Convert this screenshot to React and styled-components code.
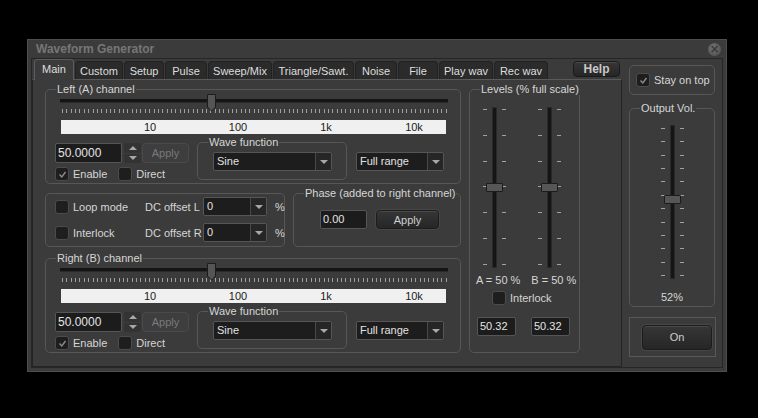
import React from "react";
import styled, { createGlobalStyle } from "styled-components";

const GlobalStyle = createGlobalStyle`
  html, body {
    margin: 0;
    padding: 0;
    background: #000000;
  }
  body {
    font-family: "Liberation Sans", Arial, sans-serif;
    font-size: 11px;
    color: #d6d6d6;
  }
  * {
    box-sizing: border-box;
  }
`;

const TABS = [
  ["Main", 40], ["Custom", 48], ["Setup", 40], ["Pulse", 42], ["Sweep/Mix", 64],
  ["Triangle/Sawt.", 81], ["Noise", 42], ["File", 40], ["Play wav", 54], ["Rec wav", 54],
];

const SCALE = ["10", "100", "1k", "10k"];

function Check({ checked }) {
    return (
        <CheckBox>
            {checked && (
                <svg width="11" height="11" viewBox="0 0 11 11">
                    <polyline points="2.5,5.5 4.8,8 8.5,3" fill="none" stroke="#8c8c8c" strokeWidth="1.4" />
                </svg>
            )}
        </CheckBox>
    );
}

function Dropdown({ value, width }) {
    return (
        <Select $w={width}>
            <SelectValue>{value}</SelectValue>
            <SelectArrow><Arrow /></SelectArrow>
        </Select>
    );
}

function HSlider({ thumbLeft }) {
    return (
        <SliderBox>
            <Track />
            <Ticks />
            <Thumb style={{ left: thumbLeft }}>
                <svg width="9" height="18" viewBox="0 0 9 18">
                    <polygon points="0.5,0.5 8.5,0.5 8.5,13 4.5,17 0.5,13" fill="#555555" stroke="#1c1c1c" />
                </svg>
            </Thumb>
        </SliderBox>
    );
}

function VSlider({ height, ticks, thumbTop, pad }) {
    const list = Array.from({ length: ticks });
    return (
        <VWrap $h={height}>
            <TickCol $pad={pad}>{list.map((_, i) => <Tick key={i} />)}</TickCol>
            <VTrack>
                <VThumb style={{ top: thumbTop }} />
            </VTrack>
            <TickCol $pad={pad}>{list.map((_, i) => <Tick key={i} />)}</TickCol>
        </VWrap>
    );
}

function Channel({ title, gapTop }) {
    return (
        <ChannelGroup $top={gapTop}>
            <Legend>{title}</Legend>
            <ChannelBody>
                <HSlider thumbLeft={147} />
                <Scale>
                    {SCALE.map(s => <ScaleCell key={s}>{s}</ScaleCell>)}
                </Scale>
                <ControlsRow>
                    <InputCol>
                        <InlineRow>
                            <Field $w={67} $h={20} $fs={12}>50.0000</Field>
                            <Spinner>
                                <SpinHalf><UpArrow /></SpinHalf>
                                <SpinHalf><Arrow /></SpinHalf>
                            </Spinner>
                            <Button $w={47} $h={20} disabled>Apply</Button>
                        </InlineRow>
                        <CheckRow>
                            <CheckLabel><Check checked />Enable</CheckLabel>
                            <CheckLabel><Check />Direct</CheckLabel>
                        </CheckRow>
                    </InputCol>
                    <WaveGroup>
                        <Legend>Wave function</Legend>
                        <WaveBody>
                            <Dropdown value="Sine" width={119} />
                        </WaveBody>
                    </WaveGroup>
                    <RangeSlot>
                        <Dropdown value="Full range" width={88} />
                    </RangeSlot>
                </ControlsRow>
            </ChannelBody>
        </ChannelGroup>
    );
}

export default function App() {
    return (
        <Screen>
            <GlobalStyle />
            <Window>
                <TitleBar>
                    <Title>Waveform Generator</Title>
                    <Close>×</Close>
                </TitleBar>
                <Frame>
                    <LeftArea>
                        <TabRow>
                            {TABS.map(([name, w], i) => (
                                <Tab key={name} $w={w} $active={i === 0}>{name}</Tab>
                            ))}
                            <Help>Help</Help>
                        </TabRow>
                        <Panel>
                            <MainColumn>
                                <Channel title="Left (A) channel" gapTop={0} />
                                <MiddleRow>
                                    <LoopGroup>
                                        <LoopGrid>
                                            <CheckLabel><Check />Loop mode</CheckLabel>
                                            <span>DC offset L</span>
                                            <Dropdown value="0" width={64} />
                                            <Percent>%</Percent>
                                            <CheckLabel><Check />Interlock</CheckLabel>
                                            <span>DC offset R</span>
                                            <Dropdown value="0" width={64} />
                                            <Percent>%</Percent>
                                        </LoopGrid>
                                    </LoopGroup>
                                    <PhaseGroup>
                                        <Legend>Phase (added to right channel)</Legend>
                                        <PhaseBody>
                                            <Field $w={47} $h={19}>0.00</Field>
                                            <Button $w={63} $h={19}>Apply</Button>
                                        </PhaseBody>
                                    </PhaseGroup>
                                </MiddleRow>
                                <Channel title="Right (B) channel" gapTop={5} />
                            </MainColumn>
                            <LevelsGroup>
                                <Legend>Levels (% full scale)</Legend>
                                <LevelSliders>
                                    <VSlider height={161} ticks={7} thumbTop={75} pad="2px 0 3px" />
                                    <VSlider height={161} ticks={7} thumbTop={75} pad="2px 0 3px" />
                                </LevelSliders>
                                <LevelLabels>
                                    <span>A = 50 %</span>
                                    <span>B = 50 %</span>
                                </LevelLabels>
                                <LevelInterlock>
                                    <CheckLabel><Check />Interlock</CheckLabel>
                                </LevelInterlock>
                                <LevelInputs>
                                    <Field $w={39} $h={19}>50.32</Field>
                                    <Field $w={39} $h={19}>50.32</Field>
                                </LevelInputs>
                            </LevelsGroup>
                        </Panel>
                    </LeftArea>
                    <RightColumn>
                        <StayBox>
                            <CheckLabel><Check checked />Stay on top</CheckLabel>
                        </StayBox>
                        <OutGroup>
                            <Legend>Output Vol.</Legend>
                            <OutBody>
                                <VSlider height={154} ticks={12} thumbTop={69} pad="3px 0 3px" />
                                <OutValue>52%</OutValue>
                            </OutBody>
                        </OutGroup>
                        <OnBox>
                            <Button $w={70} $h={25}>On</Button>
                        </OnBox>
                    </RightColumn>
                </Frame>
            </Window>
        </Screen>
    );
}

const Screen = styled.div`
    width: 758px;
    height: 418px;
    padding: 39px 0 0 27px;
    background: #000000;
`;

const Window = styled.div`
    width: 700px;
    height: 333px;
    background: #3b3b3b;
    border: 1px solid #4e4e4e;
    padding: 0 3px 3px 3px;
    display: flex;
    flex-direction: column;
`;

const TitleBar = styled.div`
    height: 18px;
    display: flex;
    align-items: center;
    justify-content: space-between;
    padding: 0 2px 0 5px;
`;

const Title = styled.div`
    font-weight: bold;
    font-size: 12px;
    color: #767676;
`;

const Close = styled.div`
    width: 13px;
    height: 13px;
    border-radius: 50%;
    background: radial-gradient(circle at 40% 35%, #707070, #4e4e4e);
    color: #3a3a3a;
    font-size: 12px;
    font-weight: bold;
    line-height: 13px;
    text-align: center;
    font-family: "DejaVu Sans", sans-serif;
`;

const Frame = styled.div`
    flex: 1;
    display: flex;
    gap: 7px;
    border: 1px solid #262626;
    padding-right: 5px;
`;

const LeftArea = styled.div`
    width: 590px;
    display: flex;
    flex-direction: column;
`;

const TabRow = styled.div`
    height: 20px;
    display: flex;
    align-items: flex-end;
    gap: 1px;
    padding-left: 2px;
`;

const Tab = styled.div`
    position: relative;
    z-index: ${({ $active }) => $active ? 2 : 0};
    width: ${({ $w }) => $w}px;
    height: ${({ $active }) => $active ? 21 : 18}px;
    margin-bottom: ${({ $active }) => $active ? -1 : 0}px;
    display: flex;
    align-items: center;
    justify-content: center;
    padding-bottom: ${({ $active }) => $active ? 2 : 0}px;
    background: ${({ $active }) => $active ? '#3b3b3b' : '#2b2b2b'};
    border: 1px solid ${({ $active }) => $active ? '#5c5c5c' : '#222222'};
    border-bottom: none;
    border-radius: 4px 4px 0 0;
    color: #dedede;
    white-space: nowrap;
`;

const Help = styled.div`
    margin-left: auto;
    margin-right: 2px;
    margin-bottom: 2px;
    width: 47px;
    height: 16px;
    border: 1px solid #1a1a1a;
    border-radius: 4px;
    background: linear-gradient(#363636, #262626);
    box-shadow: inset 0 1px 0 #4a4a4a;
    color: #c8c8c8;
    font-weight: bold;
    font-size: 12px;
    display: flex;
    align-items: center;
    justify-content: center;
`;

const Panel = styled.div`
    flex: 1;
    border: 1px solid #242424;
    border-top-color: #5a5a5a;
    display: flex;
    gap: 8px;
    padding: 3px 0 0 12px;
`;

const MainColumn = styled.div`
    width: 416px;
    display: flex;
    flex-direction: column;
`;

const Group = styled.fieldset`
    margin: 0;
    padding: 0;
    min-width: 0;
    border: 1px solid #575757;
    border-radius: 5px;
`;

const ChannelGroup = styled(Group)`
    height: 101px;
    margin-top: ${({ $top }) => $top}px;
`;

const Legend = styled.legend`
    margin-left: 10px;
    padding: 0 1px;
    line-height: 12px;
    font-size: 11px;
    color: #d6d6d6;
    white-space: nowrap;
`;

const ChannelBody = styled.div`
    padding-left: 9px;
`;

const SliderBox = styled.div`
    position: relative;
    display: flex;
    flex-direction: column;
    width: 388px;
    height: 19px;
    margin: -1px 0 0 5px;
`;

const Track = styled.div`
    margin-top: 5px;
    height: 4px;
    flex: none;
    background: #151515;
    border-bottom: 1px solid #2a2a2a;
`;

const Ticks = styled.div`
    margin: 6px 1px 0 2px;
    height: 4px;
    flex: none;
    background: repeating-linear-gradient(90deg, #a0a0a0 0 1px, transparent 1px 4.36px);
`;

const Thumb = styled.div`
    position: absolute;
    top: 0;
    width: 9px;
    height: 18px;
    line-height: 0;
`;

const Scale = styled.div`
    margin: 7px 0 0 6px;
    width: 385px;
    height: 14px;
    background: #f0f0f0;
    display: flex;
    padding-left: 45px;
    overflow: hidden;
`;

const ScaleCell = styled.div`
    flex: none;
    width: 88px;
    text-align: center;
    color: #1a1a1a;
    line-height: 14px;
    font-size: 11px;
`;

const ControlsRow = styled.div`
    display: flex;
    align-items: flex-start;
    margin-top: 2px;
`;

const InputCol = styled.div`
    margin-top: 7px;
    display: flex;
    flex-direction: column;
`;

const InlineRow = styled.div`
    display: flex;
    align-items: center;
`;

const Field = styled.div`
    width: ${({ $w }) => $w}px;
    height: ${({ $h }) => $h}px;
    background: #1c1c1c;
    border: 1px solid #555555;
    border-radius: 2px;
    color: #e4e4e4;
    font-size: ${({ $fs }) => $fs || 11}px;
    line-height: ${({ $h }) => $h - 2}px;
    padding-left: 2px;
`;

const Spinner = styled.div`
    margin-left: 2px;
    width: 17px;
    height: 20px;
    display: flex;
    flex-direction: column;
    gap: 1px;
`;

const SpinHalf = styled.div`
    flex: 1;
    background: #333333;
    border-radius: 2px;
    display: flex;
    align-items: center;
    justify-content: center;
`;

const Arrow = styled.div`
    width: 0;
    height: 0;
    border-left: 4px solid transparent;
    border-right: 4px solid transparent;
    border-top: 4px solid #a8a8a8;
`;

const UpArrow = styled.div`
    width: 0;
    height: 0;
    border-left: 4px solid transparent;
    border-right: 4px solid transparent;
    border-bottom: 4px solid #a8a8a8;
`;

const Button = styled.div`
    width: ${({ $w }) => $w}px;
    height: ${({ $h }) => $h}px;
    margin-left: ${({ disabled }) => disabled ? 1 : 9}px;
    border-radius: 4px;
    border: 1px solid ${({ disabled }) => disabled ? '#4a4a4a' : '#1c1c1c'};
    background: ${({ disabled }) => disabled ? '#3e3e3e' : 'linear-gradient(#363636, #262626)'};
    box-shadow: ${({ disabled }) => disabled ? 'none' : 'inset 0 1px 0 #4a4a4a, 0 0 0 1px #474747'};
    color: ${({ disabled }) => disabled ? '#7a7a7a' : '#cfcfcf'};
    font-size: 11px;
    display: flex;
    align-items: center;
    justify-content: center;
`;

const CheckRow = styled.div`
    display: flex;
    gap: 11px;
    margin-top: 4px;
`;

const CheckLabel = styled.label`
    display: flex;
    align-items: center;
    gap: 4px;
    white-space: nowrap;
    color: #d6d6d6;
    font-size: 11px;
`;

const CheckBox = styled.span`
    width: 14px;
    height: 14px;
    border: 1px solid #4c4c4c;
    border-radius: 3px;
    background: #1e1e1e;
    display: inline-flex;
    align-items: center;
    justify-content: center;
`;

const WaveGroup = styled(Group)`
    margin-left: 8px;
    width: 150px;
    height: 44px;
`;

const WaveBody = styled.div`
    padding: 4px 0 0 15px;
`;

const RangeSlot = styled.div`
    margin: 16px 0 0 9px;
`;

const Select = styled.div`
    width: ${({ $w }) => $w}px;
    height: 19px;
    display: flex;
    background: #1d1d1d;
    border: 1px solid #565656;
    border-radius: 2px;
`;

const SelectValue = styled.div`
    flex: 1;
    padding-left: 3px;
    line-height: 17px;
    color: #e2e2e2;
    font-size: 11px;
`;

const SelectArrow = styled.div`
    width: 16px;
    border-left: 1px solid #484848;
    background: #262626;
    display: flex;
    align-items: center;
    justify-content: center;
`;

const MiddleRow = styled.div`
    display: flex;
    gap: 8px;
    margin-top: 3px;
`;

const LoopGroup = styled(Group)`
    width: 240px;
    height: 54px;
    margin-top: 6px;
`;

const LoopGrid = styled.div`
    display: grid;
    grid-template-columns: 90px 58px 64px auto;
    grid-auto-rows: 19px;
    row-gap: 7px;
    align-items: center;
    padding: 3px 0 0 9px;
    font-size: 11px;
    white-space: nowrap;
`;

const Percent = styled.span`
    margin-left: 8px;
`;

const PhaseGroup = styled(Group)`
    width: 168px;
    height: 60px;
`;

const PhaseBody = styled.div`
    display: flex;
    padding: 11px 0 0 26px;
`;

const LevelsGroup = styled(Group)`
    width: 111px;
    height: 270px;
`;

const LevelSliders = styled.div`
    display: flex;
    gap: 32px;
    padding: 12px 0 0 13px;
`;

const VWrap = styled.div`
    display: flex;
    gap: 5px;
    height: ${({ $h }) => $h}px;
`;

const TickCol = styled.div`
    width: 4px;
    display: flex;
    flex-direction: column;
    justify-content: space-between;
    padding: ${({ $pad }) => $pad};
`;

const Tick = styled.div`
    height: 1px;
    background: #a2a2a2;
`;

const VTrack = styled.div`
    position: relative;
    width: 5px;
    background: #151515;
    border: 1px solid #2a2a2a;
`;

const VThumb = styled.div`
    position: absolute;
    left: -7px;
    width: 17px;
    height: 9px;
    background: #565656;
    border: 1px solid #1c1c1c;
    border-radius: 1px;
`;

const LevelLabels = styled.div`
    display: flex;
    gap: 11px;
    padding-left: 6px;
    margin-top: 5px;
    line-height: 14px;
    font-size: 11px;
    white-space: nowrap;
`;

const LevelInterlock = styled.div`
    display: flex;
    padding-left: 22px;
    margin-top: 4px;
`;

const LevelInputs = styled.div`
    display: flex;
    gap: 15px;
    padding-left: 7px;
    margin-top: 12px;
`;

const RightColumn = styled.div`
    width: 87px;
    padding-top: 6px;
    display: flex;
    flex-direction: column;
`;

const StayBox = styled.div`
    width: 86px;
    height: 30px;
    border: 1px solid #575757;
    border-radius: 5px;
    display: flex;
    align-items: center;
    padding-left: 6px;
`;

const OutGroup = styled(Group)`
    width: 86px;
    height: 205px;
    margin-top: 7px;
`;

const OutBody = styled.div`
    display: flex;
    flex-direction: column;
    align-items: center;
    padding-top: 11px;
`;

const OutValue = styled.div`
    margin-top: 11px;
    line-height: 14px;
    font-size: 11px;
`;

const OnBox = styled.div`
    margin-top: 10px;
    width: 87px;
    height: 40px;
    border: 1px solid #585858;
    display: flex;
    align-items: center;
    justify-content: center;
`;
